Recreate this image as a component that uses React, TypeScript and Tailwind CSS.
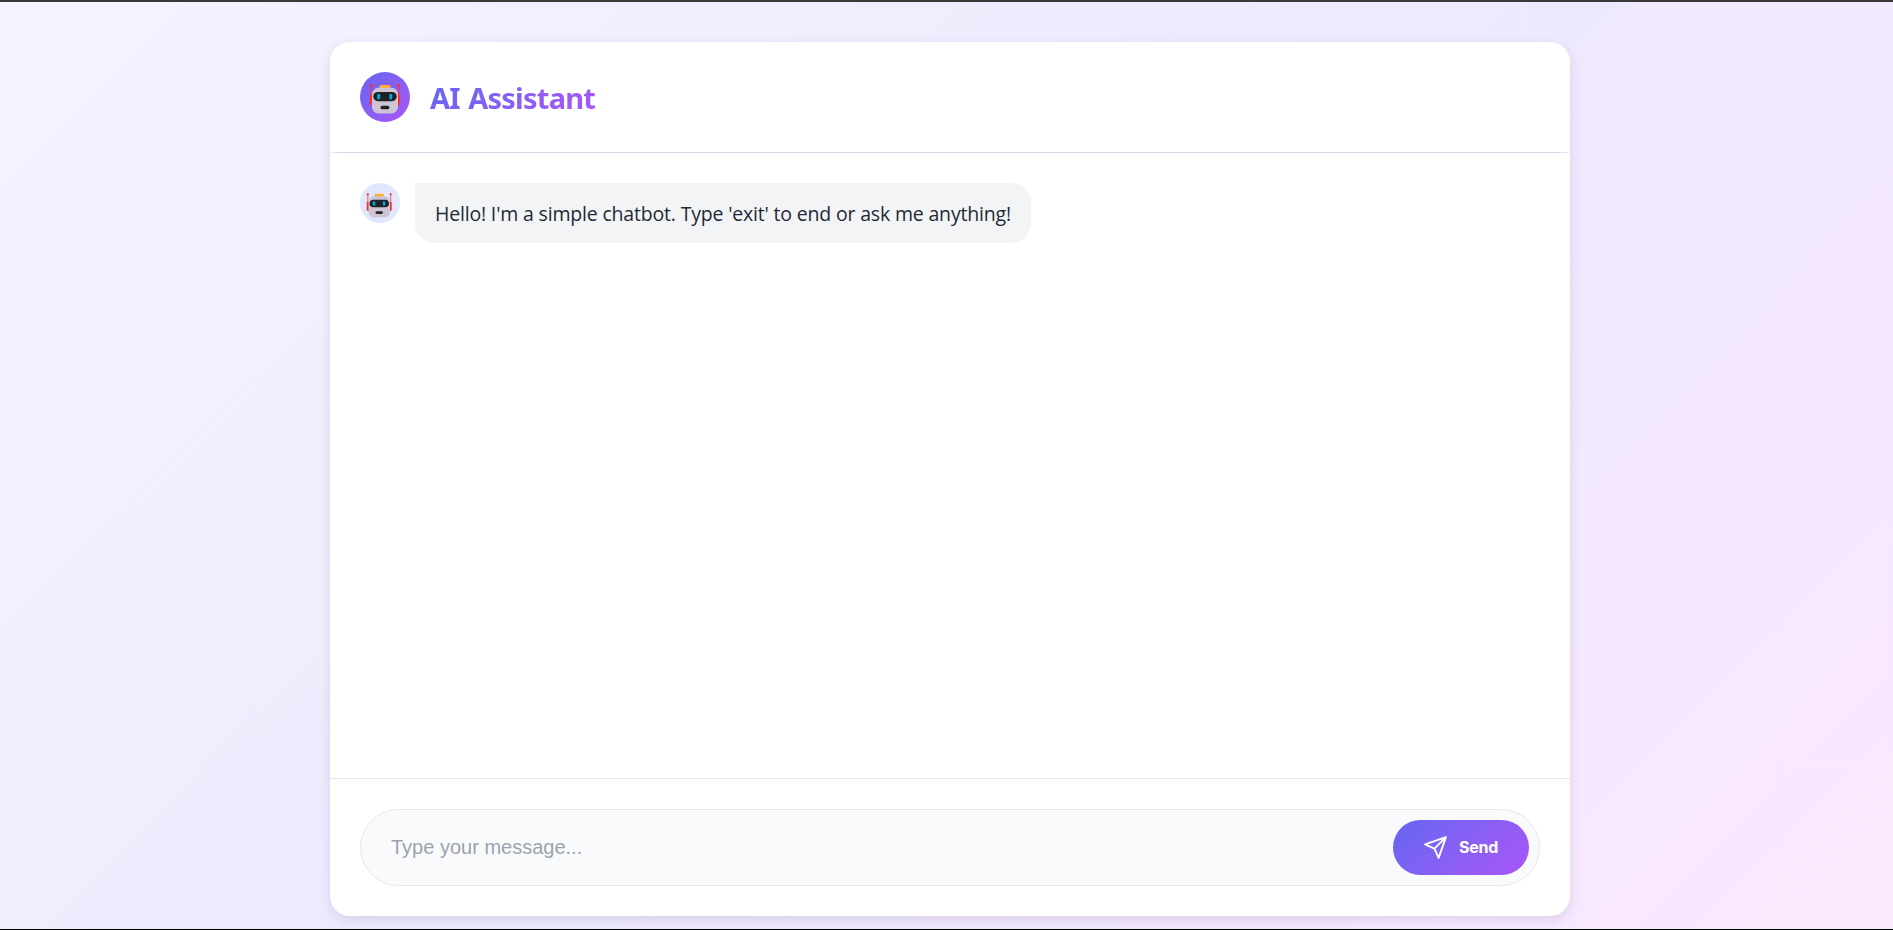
import { useState } from "react";

function Robot({ className }: { className: string }) {
  return (
    <svg viewBox="0 0 32 30" className={className} aria-hidden="true">
      <path d="M2.2 1.5v12M29.8 1.5v12" stroke="#f8312f" strokeWidth="0.9" />
      <circle cx="2.2" cy="1.5" r="1.4" fill="#f8312f" />
      <circle cx="29.8" cy="1.5" r="1.4" fill="#f8312f" />
      <rect x="0.9" y="10.5" width="4" height="11" rx="1.4" fill="#f8312f" />
      <rect x="27.1" y="10.5" width="4" height="11" rx="1.4" fill="#f8312f" />
      <rect x="10.5" y="0.9" width="11" height="5" rx="1.6" fill="#ffb02e" />
      <rect x="3" y="3.8" width="26" height="25.6" rx="6.5" fill="#cdc4d6" />
      <rect x="4.3" y="8" width="23.4" height="9.2" rx="4.6" fill="#212121" />
      <rect x="8.2" y="9.8" width="3" height="5.6" rx="1.5" fill="#00a6ed" />
      <rect x="20.3" y="9.8" width="3" height="5.6" rx="1.5" fill="#00a6ed" />
      <rect x="11.5" y="21.8" width="8.9" height="3.4" rx="1.7" fill="#212121" />
    </svg>
  );
}

export default function App() {
  const [text, setText] = useState("");
  return (
    <div className="flex h-screen flex-col border-t-2 border-b border-t-[#3b3838] border-b-black bg-[linear-gradient(135deg,#f5f3ff_0%,#ede9fe_50%,#fae8ff_100%)] px-[330px] pt-10 pb-[13px] font-['Open_Sans','Noto_Sans',sans-serif]">
      <main className="flex w-[1240px] flex-1 flex-col overflow-hidden rounded-[20px] bg-white shadow-[0_4px_12px_0_rgba(50,35,90,0.12)]">
        <header className="flex h-[110px] shrink-0 items-center gap-5 px-[30px]">
          <div className="flex size-[50px] items-center justify-center rounded-full bg-linear-135 from-[#6366f1] to-[#a855f7] pt-1">
            <Robot className="h-[30px] w-[32px]" />
          </div>
          <h1 className="bg-linear-135 from-[#6366f1] to-[#a855f7] bg-clip-text pt-0.5 font-['Noto_Sans',sans-serif] text-[29px] leading-10 font-bold tracking-[-0.75px] text-transparent [word-spacing:1.5px]">
            AI Assistant
          </h1>
        </header>
        <div className="h-px shrink-0 bg-[linear-gradient(90deg,#f0eef8,#d8d5e8_12px,#d8d5e8_calc(100%-12px),#f0eef8)]" />
        <section className="flex flex-1 items-start gap-[15px] p-[30px]">
          <div className="flex size-10 items-center justify-center rounded-full bg-[#e0e7ff] pt-[5px] pr-px">
            <Robot className="h-[25px] w-[26.5px]" />
          </div>
          <p className="flex h-[60px] w-[616px] items-center rounded-[20px] rounded-tl-none bg-[#f3f4f6] px-5 pt-0.5 text-[19.5px] tracking-[-0.18px] whitespace-nowrap text-[#1f2937]">
            Hello! I'm a simple chatbot. Type 'exit' to end or ask me anything!
          </p>
        </section>
        <form
          className="shrink-0 border-t border-[#e5e7eb] p-[30px]"
          onSubmit={(e) => e.preventDefault()}
        >
          <div className="flex h-[77px] items-center rounded-full border border-[#e5e7eb] bg-[#f9fafb] pr-2.5 pl-[30px]">
            <input
              value={text}
              onChange={(e) => setText(e.target.value)}
              placeholder="Type your message..."
              className="min-w-0 flex-1 bg-transparent pb-0.5 font-['Liberation_Sans',sans-serif] text-[20px] text-[#1f2937] outline-none placeholder:text-[#9ca3af]"
            />
            <button className="flex h-[55px] w-[136px] items-center gap-[11px] rounded-full bg-linear-135 from-[#6366f1] to-[#a855f7] pl-[30px] font-['Inter',sans-serif] text-[16px] font-bold tracking-[-0.25px] text-white">
              <svg viewBox="0 0 24 24" className="size-[25px]" fill="none" stroke="currentColor" strokeWidth="1.8" strokeLinecap="round" strokeLinejoin="round">
                <path d="M22 2 11 13M22 2l-7 20-4-9-9-4Z" />
              </svg>
              <span className="pb-0.5">Send</span>
            </button>
          </div>
        </form>
      </main>
    </div>
  );
}
